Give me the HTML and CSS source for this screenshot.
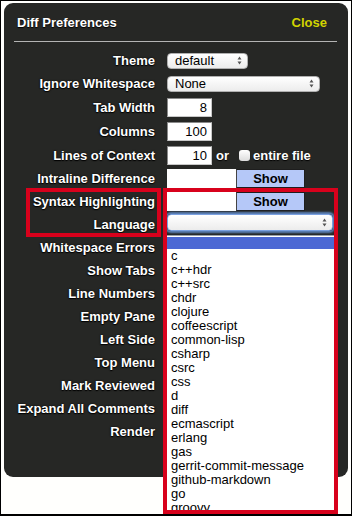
FILE: index.html
```html
<!DOCTYPE html>
<html>
<head>
<meta charset="utf-8">
<link rel="stylesheet" href="styles.css">
</head>
<body>
<div class="frame">
  <div class="panel">
    <div class="header">
      <span class="title">Diff Preferences</span>
      <span class="close">Close</span>
    </div>
    <div class="rule"></div>
    <div class="form">
      <div class="row"><span class="label">Theme</span>
        <div class="select w-theme"><span>default</span><svg class="arrows" width="5" height="9" viewBox="0 0 5 9"><path d="M2.5 0.5 L4.5 3.5 L0.5 3.5 Z M2.5 8.5 L4.5 5.5 L0.5 5.5 Z" fill="#555"/></svg></div>
      </div>
      <div class="row"><span class="label">Ignore Whitespace</span>
        <div class="select w-ignore"><span>None</span><svg class="arrows" width="5" height="9" viewBox="0 0 5 9"><path d="M2.5 0.5 L4.5 3.5 L0.5 3.5 Z M2.5 8.5 L4.5 5.5 L0.5 5.5 Z" fill="#555"/></svg></div>
      </div>
      <div class="row tall"><span class="label">Tab Width</span><div class="num">8</div></div>
      <div class="row tall"><span class="label">Columns</span><div class="num">100</div></div>
      <div class="row tall"><span class="label">Lines of Context</span><div class="num">10</div><span class="or">or</span><span class="check"></span><span class="entire">entire file</span></div>
      <div class="row"><span class="label">Intraline Difference</span><div class="blank"></div><div class="show">Show</div></div>
      <div class="row"><span class="label">Syntax Highlighting</span><div class="blank"></div><div class="show">Show</div></div>
      <div class="row"><span class="label">Language</span>
        <div class="select w-lang focus"><span></span><svg class="arrows" width="5" height="9" viewBox="0 0 5 9"><path d="M2.5 0.5 L4.5 3.5 L0.5 3.5 Z M2.5 8.5 L4.5 5.5 L0.5 5.5 Z" fill="#555"/></svg></div>
      </div>
      <div class="row"><span class="label">Whitespace Errors</span></div>
      <div class="row"><span class="label">Show Tabs</span></div>
      <div class="row"><span class="label">Line Numbers</span></div>
      <div class="row"><span class="label">Empty Pane</span></div>
      <div class="row"><span class="label">Left Side</span></div>
      <div class="row"><span class="label">Top Menu</span></div>
      <div class="row"><span class="label">Mark Reviewed</span></div>
      <div class="row"><span class="label">Expand All Comments</span></div>
      <div class="row"><span class="label">Render</span></div>
    </div>
  </div>

  <div class="dropdown">
    <div class="opt sel"></div>
    <div class="opt">c</div>
    <div class="opt">c++hdr</div>
    <div class="opt">c++src</div>
    <div class="opt">chdr</div>
    <div class="opt">clojure</div>
    <div class="opt">coffeescript</div>
    <div class="opt">common-lisp</div>
    <div class="opt">csharp</div>
    <div class="opt">csrc</div>
    <div class="opt">css</div>
    <div class="opt">d</div>
    <div class="opt">diff</div>
    <div class="opt">ecmascript</div>
    <div class="opt">erlang</div>
    <div class="opt">gas</div>
    <div class="opt">gerrit-commit-message</div>
    <div class="opt">github-markdown</div>
    <div class="opt">go</div>
    <div class="opt">groovy</div>
  </div>

  <div class="mark mark-left"></div>
  <div class="mark mark-right"></div>
</div>
</body>
</html>
```

FILE: styles.css
```css
html, body {
  margin: 0;
  padding: 0;
  background: #fff;
}
.frame {
  position: relative;
  width: 352px;
  height: 516px;
  box-sizing: border-box;
  border: 1px solid #000;
  border-bottom-width: 2px;
  background: #fffffd;
  padding: 2px 3px 0 3px;
  overflow: hidden;
  font-family: "Liberation Sans", Arial, sans-serif;
  font-size: 13px;
}
.panel {
  width: 344px;
  height: 474px;
  box-sizing: border-box;
  background: #262725;
  border-radius: 9px;
  padding: 0 10px;
}
.header {
  height: 38px;
  display: flex;
  align-items: center;
  justify-content: space-between;
  padding: 0 11px 0 3px;
  font-weight: bold;
}
.title {
  color: #fff;
  text-shadow: 0 1px 1px #000;
}
.close {
  color: #d2d400;
}
.rule {
  height: 1px;
  background: #b4b4b4;
  margin-right: 1px;
}
.form {
  margin-top: 7px;
}
.row {
  display: flex;
  align-items: center;
  height: 23px;
}
.row.tall {
  height: 24px;
}
.label {
  width: 141px;
  margin-right: 12px;
  text-align: right;
  color: #fff;
  font-weight: bold;
  white-space: nowrap;
  text-shadow: 0 1px 1px #000, 0 0 2px #000;
}
.select {
  height: 16px;
  box-sizing: border-box;
  display: flex;
  align-items: center;
  justify-content: space-between;
  padding: 0 5px 0 7px;
  border-radius: 4px;
  background: linear-gradient(#ffffff, #ececec);
  border: 1px solid #b0b0b0;
  color: #000;
  font-size: 13px;
}
.w-theme { width: 81px; }
.w-ignore { width: 153px; }
.w-lang {
  width: 166px;
  height: 17px;
  align-self: flex-start;
  margin-top: 1px;
}
.focus {
  border-color: #7aa0e0;
  box-shadow: 0 0 2px 2px rgba(110, 160, 235, 0.75);
}
.arrows {
  flex: none;
}
.num {
  width: 45px;
  height: 19px;
  box-sizing: border-box;
  background: #fff;
  border: 1px solid #8a8a8a;
  border-right-color: #c8c8c8;
  border-bottom-color: #c8c8c8;
  text-align: right;
  padding-right: 4px;
  line-height: 17px;
  color: #000;
}
.or, .entire {
  color: #fff;
  font-weight: bold;
  text-shadow: 0 1px 1px #000;
}
.or {
  margin-left: 4px;
}
.check {
  width: 11px;
  height: 11px;
  box-sizing: border-box;
  border-radius: 3px;
  background: linear-gradient(#ffffff, #dcdcdc);
  margin-left: 10px;
  margin-right: 3px;
}
.blank {
  width: 69px;
  height: 19px;
  background: #fff;
}
.show {
  width: 69px;
  height: 19px;
  box-sizing: border-box;
  background: #b5c8f8;
  border: 1px solid #1e1e1e;
  border-left-color: #444;
  color: #000;
  font-weight: bold;
  text-align: center;
  line-height: 17px;
}
.dropdown {
  position: absolute;
  left: 166px;
  top: 234px;
  width: 167px;
  height: 277px;
  background: #fff;
  border-top: 1px solid #9aa0aa;
  padding-top: 1px;
  box-sizing: border-box;
  overflow: hidden;
}
.opt {
  height: 14px;
  line-height: 14px;
  padding-left: 4px;
  color: #000;
  font-size: 13px;
  white-space: nowrap;
}
.opt.sel {
  height: 12px;
  background: #4c68d4;
}
.mark {
  position: absolute;
  border: 4px solid #d8011c;
  box-sizing: border-box;
}
.mark-left {
  left: 25px;
  top: 187px;
  width: 135px;
  height: 49px;
}
.mark-right {
  left: 162px;
  top: 187px;
  width: 175px;
  height: 326px;
}
```
